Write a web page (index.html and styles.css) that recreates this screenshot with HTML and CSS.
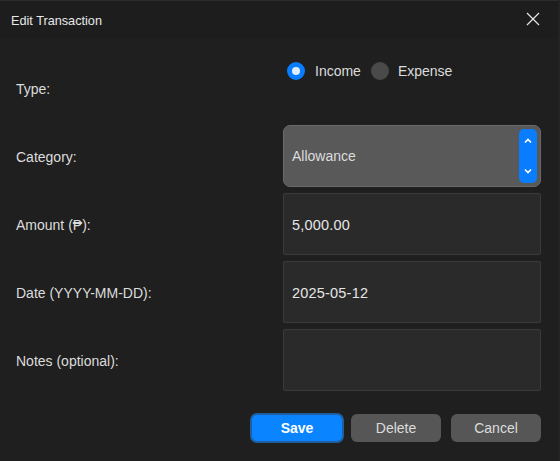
FILE: index.html
```html
<!DOCTYPE html>
<html>
<head>
<meta charset="utf-8">
<link rel="stylesheet" href="styles.css">
</head>
<body>
<div class="window">
  <div class="titlebar">
    <span class="title">Edit Transaction</span>
    <svg class="close" width="14" height="14" viewBox="0 0 14 14"><path d="M1 1L13 13M13 1L1 13" stroke="#e6e6e6" stroke-width="1.2" fill="none"/></svg>
  </div>
  <div class="form">
    <div class="label">Type:</div>
    <div class="field type-field">
      <div class="radios">
        <span class="radio on"></span><span class="rtext">Income</span>
        <span class="radio"></span><span class="rtext">Expense</span>
      </div>
    </div>
    <div class="label">Category:</div>
    <div class="field">
      <div class="select">
        <span class="value">Allowance</span>
        <span class="spin">
          <svg width="10" height="8" viewBox="0 0 10 8"><path d="M2 5.5L5 2.5L8 5.5" stroke="#fff" stroke-width="1.6" fill="none"/></svg>
          <svg width="10" height="8" viewBox="0 0 10 8"><path d="M2 2.5L5 5.5L8 2.5" stroke="#fff" stroke-width="1.6" fill="none"/></svg>
        </span>
      </div>
    </div>
    <div class="label">Amount (₱):</div>
    <div class="field"><div class="entry">5,000.00</div></div>
    <div class="label">Date (YYYY-MM-DD):</div>
    <div class="field"><div class="entry">2025-05-12</div></div>
    <div class="label">Notes (optional):</div>
    <div class="field"><div class="entry"></div></div>
  </div>
  <div class="buttons">
    <button class="btn save">Save</button>
    <button class="btn gray del">Delete</button>
    <button class="btn gray">Cancel</button>
  </div>
</div>
</body>
</html>
```
FILE: styles.css
```css
html, body {
  margin: 0;
  padding: 0;
  background: #1f1f1f;
}
.window {
  width: 560px;
  height: 461px;
  box-sizing: border-box;
  background: #1f1f1f;
  border-top: 1px solid #2c2c2c;
  border-right: 2px solid #232323;
  font-family: "Liberation Sans", Arial, sans-serif;
  font-size: 14px;
  color: #dcdcdc;
  display: flex;
  flex-direction: column;
}
.titlebar {
  height: 37px;
  display: flex;
  align-items: center;
  justify-content: space-between;
  padding: 0 18px 0 11px;
  background: #1d1d1d;
  color: #e8e8e8;
}
.title { padding-top: 3px; font-size: 12.7px; }
.close { display: block; margin-top: -1px; }
.form {
  display: grid;
  grid-template-columns: 267px 258px;
  grid-auto-rows: 62px;
  row-gap: 6px;
  padding: 19px 0 0 16px;
}
.label {
  display: flex;
  align-items: center;
  padding-top: 1px;
}
.field { display: flex; }
.type-field { align-items: flex-start; padding-top: 5px; }
.radios {
  display: flex;
  align-items: center;
  padding-left: 4px;
}
.radio {
  width: 18px;
  height: 18px;
  border-radius: 50%;
  background: #4a4a4a;
  box-sizing: border-box;
  margin-right: 9px;
}
.radio.on {
  background: #dfeeff;
  border: 5px solid #0a7cff;
  margin-right: 10px;
}
.rtext { margin-right: 10px; }
.select {
  flex: 1;
  box-sizing: border-box;
  background: #595959;
  border: 1px solid #6a6a6a;
  border-radius: 7px;
  display: flex;
  align-items: center;
  justify-content: space-between;
  padding: 0 3px 0 8px;
}
.spin {
  width: 18px;
  height: 54px;
  background: #0a7cff;
  border-radius: 5px;
  display: flex;
  flex-direction: column;
  align-items: center;
  justify-content: space-between;
  padding: 8px 0;
  box-sizing: border-box;
}
.spin svg { display: block; }
.entry {
  flex: 1;
  box-sizing: border-box;
  background: #2a2a2a;
  border: 1px solid #3a3a3a;
  border-radius: 2px;
  display: flex;
  align-items: center;
  padding: 1px 0 0 8px;
  color: #e6e6e6;
  font-size: 14.5px;
  letter-spacing: 0.2px;
}
.buttons {
  display: flex;
  justify-content: flex-end;
  padding: 23px 17px 0 0;
}
.btn {
  font-family: "Liberation Sans", Arial, sans-serif;
  font-size: 14px;
  height: 28px;
  border-radius: 6px;
  border: none;
  padding: 0;
  margin-left: 10px;
}
.save {
  width: 94px;
  height: 30px;
  margin-top: -1px;
  background: #0a84ff;
  border: 2px solid #1f5f9f;
  color: #fff;
  font-weight: bold;
  border-radius: 7px;
}
.gray {
  width: 90px;
  background: #565656;
  color: #dcdcdc;
}
.del { margin-left: 7px; }
```
